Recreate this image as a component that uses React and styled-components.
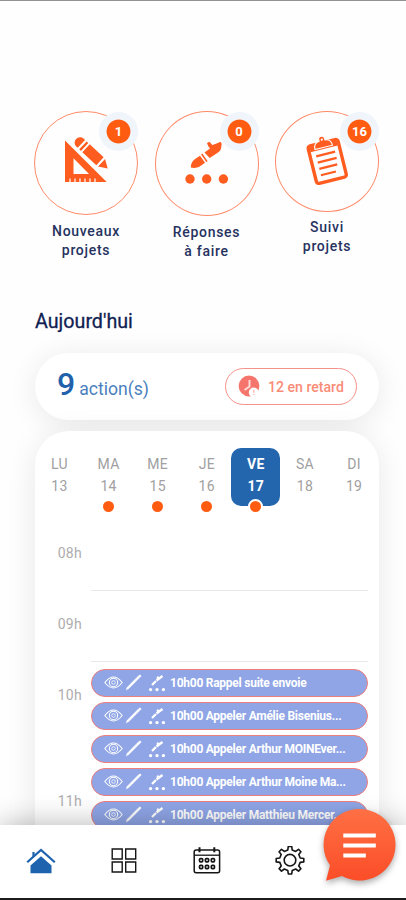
import styled, { createGlobalStyle, css } from 'styled-components';

const GlobalStyle = createGlobalStyle`
  * {
    box-sizing: border-box;
  }

  body {
    margin: 0;
    background: #fff;
    font-family: Roboto, 'Liberation Sans', sans-serif;
  }
`;

const Screen = styled.div`
  position: relative;
  width: 406px;
  height: 900px;
  overflow: hidden;
  display: flex;
  flex-direction: column;
  background: #fefefe;
  border-top: 1px solid #929292;
  border-bottom: 2px solid #1c1c1c;
`;

const Content = styled.main`
  height: 824px;
  flex: none;
  overflow: hidden;
  padding: 110px 27px 0 34px;
`;

const Shortcuts = styled.section`
  display: flex;
  justify-content: space-between;
  height: 197px;
`;

const Shortcut = styled.a`
  width: 104px;
  text-align: center;
`;

const Circle = styled.div`
  position: relative;
  height: ${({ $height }) => $height}px;
  border: 1px solid #ff8a68;
  border-radius: 50%;

  svg {
    display: block;
    margin: -1px;
  }
`;

const Badge = styled.span`
  position: absolute;
  top: 0;
  right: -1px;
  width: 39px;
  height: 39px;
  display: flex;
  align-items: center;
  justify-content: center;
  border-radius: 50%;
  background: radial-gradient(circle, #ff5c12 11.4px, #f0f4fb 12.4px);
  color: #fff;
  font-size: 13px;
  font-weight: 700;
`;

const ShortcutLabel = styled.div`
  margin-top: ${({ $top }) => $top}px;
  color: #26335f;
  font-size: 14px;
  font-weight: 500;
  line-height: 19px;
  letter-spacing: 0.7px;
`;

const Title = styled.h1`
  margin: 0 0 19px 1px;
  color: #111f52;
  font-size: 19.7px;
  font-weight: 400;
  line-height: 27px;
  height: 26px;
  -webkit-text-stroke: 0.3px #111f52;
`;

const cardShadow = css`
  box-shadow: 0 4px 30px rgba(0, 0, 0, 0.09);
`;

const Summary = styled.section`
  height: 67px;
  margin: 0 0 11px 1px;
  padding: 0 22px;
  display: flex;
  align-items: center;
  justify-content: space-between;
  border-radius: 34px;
  background: #fff;
  ${cardShadow}
`;

const Count = styled.div`
  color: #4a7fbd;
  font-size: 17.6px;
  line-height: 40px;

  strong {
    margin-right: 4px;
    color: #1f62ab;
    font-size: 32px;
    font-weight: 500;
  }
`;

const Late = styled.div`
  width: 132px;
  height: 37px;
  padding-left: 12px;
  display: flex;
  align-items: center;
  gap: 7px;
  border: 1px solid #f5928a;
  border-radius: 19px;
  color: #f98c78;
  font-size: 14.1px;
  font-weight: 500;
  white-space: nowrap;
`;

const Agenda = styled.section`
  position: relative;
  height: 430px;
  margin-left: 1px;
  padding-top: 17px;
  border-radius: 34px 34px 0 0;
  background: #fff;
  ${cardShadow}
`;

const Week = styled.div`
  display: grid;
  grid-template-columns: repeat(7, 49.1px);
  height: 72px;
`;

const Day = styled.div`
  position: relative;
  width: 49px;
  height: 58px;
  padding-top: 5px;
  border-radius: 10px;
  text-align: center;
  color: ${({ $active }) => ($active ? '#fff' : '#a0a0a0')};
  background: ${({ $active }) => ($active ? '#2466ae' : 'transparent')};
  font-size: 14px;
  font-weight: ${({ $active }) => ($active ? 700 : 400)};
  line-height: 22px;
  letter-spacing: 0.3px;
`;

const Dot = styled.i`
  position: absolute;
  left: 50%;
  bottom: -8px;
  width: 15px;
  height: 15px;
  margin-left: -7.5px;
  border: 2px solid #fff;
  border-radius: 50%;
  background: #ff5c12;
`;

const HourRow = styled.div`
  display: grid;
  grid-template-columns: 56px 277px;
  height: ${({ $height }) => $height}px;
`;

const Hour = styled.div`
  padding: 24px 9px 0 0;
  color: #adadad;
  font-size: 14px;
  line-height: 18px;
  letter-spacing: 0.3px;
  text-align: right;
`;

const Slot = styled.div`
  display: flex;
  flex-direction: column;
  gap: 5px;
  padding-top: 7px;
  border-bottom: 1px solid #e8e8e8;
`;

const Task = styled.div`
  flex: none;
  height: 28px;
  padding-left: 12px;
  display: flex;
  align-items: center;
  border: 1px solid #ee7f7d;
  border-radius: 14px;
  background: #8fa5e6;
  color: #fff;
  font-size: 12px;
  font-weight: 700;
  letter-spacing: -0.25px;
  white-space: nowrap;

  svg {
    flex: none;
    margin-right: 4px;
  }
`;

const Footer = styled.nav`
  position: relative;
  flex: 1;
  padding: 0 89px 2px 14px;
  display: flex;
  align-items: center;
  justify-content: space-between;
  background: #fff;
  box-shadow: 0 -2px 28px rgba(0, 0, 0, 0.27);
`;

const Tab = styled.a`
  width: 54px;
  height: 34px;
  display: flex;
  align-items: center;
  justify-content: center;
`;

const Chat = styled.button`
  position: absolute;
  left: 318px;
  bottom: 7px;
  width: 86px;
  height: 86px;
  padding: 0;
  border: 0;
  background: none;

  svg {
    display: block;
    overflow: visible;
    filter: drop-shadow(0 3px 3px rgba(0, 0, 0, 0.32));
  }
`;

function RulerIcon() {
  return (
    <svg width="104" height="104" viewBox="0 0 104 104" fill="#ff5c20">
      <path fillRule="evenodd" d="M31 29.5 72.7 71H31ZM39.5 47.3V63H55Z" />
      <path d="M36 71.5v-4M41 71.5v-4M46 71.5v-4M51 71.5v-4M56 71.5v-4M61 71.5v-4" stroke="#fff" strokeWidth="1.2" />
      <g transform="translate(43.5 29.3) rotate(43) scale(1.06 1.12)">
        <path d="M5-4.8H3A4.8 4.8 0 0 0 3 4.8H5ZM7-4.8H9.2V4.8H7ZM11-4.8H29V4.8H11ZM31-4.6 39 0 31 4.6Z" />
      </g>
    </svg>
  );
}

function PenIcon() {
  return (
    <svg width="104" height="104" viewBox="0 0 104 104" fill="#ff5c20">
      <path d="M35.8 56.5Q35.8 51 40 48L45 44.8 50 51.7 45 55.2Q41 57.7 35.8 56.5Z" />
      <path d="m46.7 43 5.3 7.6" stroke="#ff5c20" strokeWidth="1.6" />
      <path d="m49.5 41.5 5.5-4q-2-1.5-3-5.5l2.5-1.3 2.8 3.3L61 32.8l4.5-2 1.2 2-.7 5q-.5 2-3 3.8L54.7 47Z" />
      <circle cx="35" cy="68" r="4.7" />
      <circle cx="51.7" cy="68" r="4.7" />
      <circle cx="68.4" cy="68" r="4.7" />
    </svg>
  );
}

function ClipboardIcon() {
  return (
    <svg width="104" height="102" viewBox="0 0 104 102" fill="none" stroke="#ff5c20">
      <g transform="translate(52 49.5) rotate(-14)">
        <rect x="-15.4" y="-18.3" width="30.8" height="38.6" rx="2.5" strokeWidth="3.4" />
        <path d="M-14-17H14V-12H-14Z" fill="#ff5c20" stroke="none" />
        <path d="M-9-13.5Q-9-20-3-20.5V-22a3 3 0 0 1 6 0v1.5Q9-20 9-13.5Z" fill="#ff5c20" stroke="#fff" strokeWidth="1.1" />
        <circle cy="-21.5" r="1.1" fill="#fff" stroke="none" />
        <path d="M-9.5-6.6H10M-9.5-.2H10M-9.5 6.2H9M-9.5 12.8H6" strokeWidth="2.2" />
      </g>
    </svg>
  );
}

function LateIcon() {
  return (
    <svg width="23" height="23" viewBox="0 0 23 23">
      <circle cx="11" cy="11" r="10.4" fill="#f5756c" />
      <path d="M11.5 5v6.5L6.5 15" fill="none" stroke="#ffd9d5" strokeWidth="2" />
      <circle cx="15.8" cy="17.5" r="5" fill="#fff" />
      <path d="M15.8 14.8v3M15.8 19v1" stroke="#f7b0a9" strokeWidth="1.2" />
    </svg>
  );
}

function TaskIcons() {
  return (
    <svg width="62" height="22" viewBox="0 0 62 22" fill="none" stroke="#fff">
      <path d="M.8 10.5Q9.5-.5 18.2 10.5 9.5 21.5.8 10.5Z" strokeWidth="1.1" />
      <circle cx="9.5" cy="10.5" r="4.2" strokeWidth="1.1" />
      <circle cx="9.5" cy="10.5" r="1.8" strokeWidth=".8" />
      <path d="m22.3 17.8 1-2.5L35 3.4q2-1 2 .8L25 16.3Z" fill="#fff" strokeWidth=".6" />
      <path d="m48 13 4-4M52.5 8.5 58.5 4M53 5l2 1.5" strokeWidth="2.3" />
      <path d="M46.6 17.6h.01M53 17.6h.01M59.4 17.6h.01" strokeWidth="3.4" strokeLinecap="round" />
    </svg>
  );
}

function HomeIcon() {
  return (
    <svg width="30" height="28" viewBox="0 0 30 28">
      <path d="M4.5 18.5 15 9.3l10.5 9.2v7.8h-21Z" fill="#1d63ae" />
      <path d="M1.2 15.2 15 2.9l13.8 12.3" fill="none" stroke="#1d63ae" strokeWidth="2.2" />
      <path d="M7.5 9.5V5" stroke="#1d63ae" strokeWidth="2.2" />
    </svg>
  );
}

function GridIcon() {
  return (
    <svg width="26" height="26" viewBox="0 0 26 26" fill="none" stroke="#151515" strokeWidth="1.4">
      <path d="M1.2 1h10v10h-10ZM14.7 1h10v10h-10ZM1.2 14h10v10h-10ZM14.7 14h10v10h-10Z" />
    </svg>
  );
}

function CalendarIcon() {
  const cells = [8.1, 14, 19.9];

  return (
    <svg width="28" height="28" viewBox="0 0 28 28" fill="none" stroke="#151515">
      <rect x="1.2" y="3" width="25.4" height="22.8" rx="2" strokeWidth="1.5" />
      <path d="M1.2 8.2h25.4" strokeWidth="1.3" />
      <path d="M6.5.2v5M21.3.2v5" strokeWidth="2" />
      {cells.map((x) => (
        <g key={x} strokeWidth="1.7">
          <rect x={x - 1.6} y="11.6" width="3.2" height="3.2" rx="1" />
          <rect x={x - 1.6} y="18.4" width="3.2" height="3.2" rx="1" />
        </g>
      ))}
    </svg>
  );
}

function GearIcon() {
  return (
    <svg width="30" height="30" viewBox="0 0 30 30" fill="none" stroke="#151515" strokeWidth="1.6">
      {/* one tooth every 45 degrees, drawn as a single outline */}
      <path
        strokeLinejoin="round"
        transform="translate(0 -.8)"
        d="M12.8 4.8 13.3 1.2h3.4l.5 3.6 3.5 1.4 2.8-2.1 2.4 2.4-2.1 2.8 1.4 3.5 3.6.5v3.4l-3.6.5-1.4 3.5 2.1 2.8-2.4 2.4-2.8-2.1-3.5 1.4-.5 3.6h-3.4l-.5-3.6-3.5-1.4-2.8 2.1-2.4-2.4 2.1-2.8-1.4-3.5-3.6-.5v-3.4l3.6-.5 1.4-3.5-2.1-2.8 2.4-2.4 2.8 2.1Z"
      />
      <circle cx="15" cy="14.2" r="5.8" />
    </svg>
  );
}

function ChatIcon() {
  return (
    <svg width="86" height="86" viewBox="0 0 86 86">
      <defs>
        <linearGradient id="chat" x1="0" y1="0" x2="0" y2="1">
          <stop offset="0" stopColor="#ff7044" />
          <stop offset="1" stopColor="#fb4d28" />
        </linearGradient>
      </defs>
      <path
        fill="url(#chat)"
        d="M41.7 4A35.8 35.8 0 1 1 24 70.9L8 75.8 12 60.3A35.8 35.8 0 0 1 41.7 4Z"
      />
      <path d="M25.3 30.5h32.5M25.3 40.6h32.5M25.3 50.5h22.5" stroke="#fff" strokeWidth="4" />
    </svg>
  );
}

const shortcuts = [
  { icon: <RulerIcon />, count: 1, label: ['Nouveaux', 'projets'], height: 104, top: 7 },
  { icon: <PenIcon />, count: 0, label: ['Réponses', 'à faire'], height: 105, top: 7 },
  { icon: <ClipboardIcon />, count: 16, label: ['Suivi', 'projets'], height: 101, top: 6 },
];

const days = [
  { name: 'LU', date: 13 },
  { name: 'MA', date: 14, dot: true },
  { name: 'ME', date: 15, dot: true },
  { name: 'JE', date: 16, dot: true },
  { name: 'VE', date: 17, dot: true, active: true },
  { name: 'SA', date: 18 },
  { name: 'DI', date: 19 },
];

const hours = [
  { label: '08h', height: 71, tasks: [] },
  { label: '09h', height: 71, tasks: [] },
  {
    label: '10h',
    height: 106,
    tasks: [
      '10h00 Rappel suite envoie',
      '10h00 Appeler Amélie Bisenius...',
      '10h00 Appeler Arthur MOINEver...',
      '10h00 Appeler Arthur Moine Ma...',
      '10h00 Appeler Matthieu Mercer...',
    ],
  },
  { label: '11h', height: 106, tasks: [] },
];

function App() {
  return (
    <>
      <GlobalStyle />
      <Screen>
        <Content>
          <Shortcuts>
            {shortcuts.map(({ icon, count, label, height, top }) => (
              <Shortcut key={count}>
                <Circle $height={height}>
                  {icon}
                  <Badge>{count}</Badge>
                </Circle>
                <ShortcutLabel $top={top}>
                  {label[0]}
                  <br />
                  {label[1]}
                </ShortcutLabel>
              </Shortcut>
            ))}
          </Shortcuts>

          <Title>Aujourd'hui</Title>

          <Summary>
            <Count>
              <strong>9</strong>action(s)
            </Count>
            <Late>
              <LateIcon />
              12 en retard
            </Late>
          </Summary>

          <Agenda>
            <Week>
              {days.map(({ name, date, dot, active }) => (
                <Day key={name} $active={active}>
                  {name}
                  <br />
                  {date}
                  {dot && <Dot />}
                </Day>
              ))}
            </Week>
            {hours.map(({ label, height, tasks }) => (
              <HourRow key={label} $height={height}>
                <Hour>{label}</Hour>
                <Slot>
                  {tasks.map((task) => (
                    <Task key={task}>
                      <TaskIcons />
                      {task}
                    </Task>
                  ))}
                </Slot>
              </HourRow>
            ))}
          </Agenda>
        </Content>

        <Footer>
          <Tab><HomeIcon /></Tab>
          <Tab><GridIcon /></Tab>
          <Tab><CalendarIcon /></Tab>
          <Tab><GearIcon /></Tab>
          <Chat aria-label="Messages"><ChatIcon /></Chat>
        </Footer>
      </Screen>
    </>
  );
}

export default App;
